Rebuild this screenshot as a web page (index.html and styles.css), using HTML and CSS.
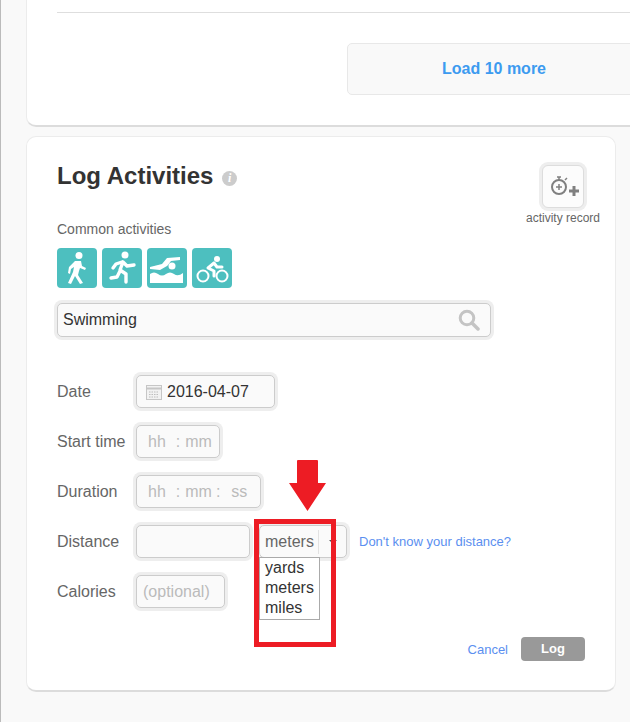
FILE: index.html
```html
<!DOCTYPE html>
<html lang="en">
<head>
    <meta charset="UTF-8">
    <title>Log Activities</title>
    <link rel="stylesheet" href="styles.css">
</head>
<body>
    <div class="page">
        <div class="card card-top">
            <div class="divider"></div>
            <div class="load-row">
                <a class="load-more" href="#">Load 10 more</a>
            </div>
        </div>

        <div class="card card-log">
            <div class="log-head">
                <div>
                    <h2 class="log-title">Log Activities <span class="info-dot">i</span></h2>
                    <div class="common-label">Common activities</div>
                </div>
                <div class="record">
                    <div class="record-btn">
                        <svg width="34" height="30" viewBox="0 0 34 30">
                            <circle cx="11" cy="16" r="7" fill="none" stroke="#808080" stroke-width="2"/>
                            <path d="M9 6h4M11 6v3M17 9l2-2M11 13v6M8 16h6" fill="none" stroke="#808080" stroke-width="1.5"/>
                            <path d="M26 15v10M21 20h10" fill="none" stroke="#808080" stroke-width="3"/>
                        </svg>
                    </div>
                    <div class="record-label">activity record</div>
                </div>
            </div>

            <div class="activity-icons">
                <a class="activity-icon" href="#">
                    <svg width="40" height="40" viewBox="0 0 40 40">
                        <circle cx="22" cy="7.500" r="3.500" fill="#fff"/>
                        <path d="M18 13h6l1 5 4 2-1 2-5-2-1 3-1 4 5 8-3 1-5-8-4 8-3-1 5-11 1-5-3 2-1 5-2-1 1-6z" fill="#fff"/>
                    </svg>
                </a>
                <a class="activity-icon" href="#">
                    <svg width="40" height="40" viewBox="0 0 40 40">
                        <circle cx="23" cy="7" r="3.500" fill="#fff"/>
                        <path d="M21 14l-3 8 6 4 0 8M18 23l-3 6-6 1M20 14l-6 2-3 4M21 14l4 4 7-1" fill="none" stroke="#fff" stroke-width="3.400" stroke-linecap="round" stroke-linejoin="round"/>
                    </svg>
                </a>
                <a class="activity-icon" href="#">
                    <svg width="40" height="40" viewBox="0 0 40 40">
                        <circle cx="25" cy="18" r="3.500" fill="#fff"/>
                        <path d="M3 19l12-3 5-6 13-1v3l-9 1-3 4-1 1-7 4-10-1z" fill="#fff"/>
                        <path d="M3 26q4-3 8 0t8 0 8 0 9-1v10H3z" fill="#fff"/>
                    </svg>
                </a>
                <a class="activity-icon" href="#">
                    <svg width="40" height="40" viewBox="0 0 40 40">
                        <circle cx="25" cy="11" r="3" fill="#fff"/>
                        <circle cx="11" cy="28" r="5.500" fill="none" stroke="#fff" stroke-width="2"/>
                        <circle cx="30" cy="28" r="5.500" fill="none" stroke="#fff" stroke-width="2"/>
                        <path d="M22 15l-6 5 6 3v5M22 15l3 4h5" fill="none" stroke="#fff" stroke-width="3" stroke-linecap="round" stroke-linejoin="round"/>
                    </svg>
                </a>
            </div>

            <div class="field search-field">
                <span class="search-text">Swimming</span>
                <svg width="22" height="22" viewBox="0 0 22 22">
                    <circle cx="9" cy="9" r="6.800" fill="none" stroke="#c4c4c4" stroke-width="3"/>
                    <path d="M14 14l6 6" stroke="#c4c4c4" stroke-width="3.500" stroke-linecap="round"/>
                </svg>
            </div>

            <div class="form-rows">
                <div class="form-row">
                    <label class="form-label">Date</label>
                    <div class="field date-field">
                        <svg width="18" height="18" viewBox="0 0 18 18">
                            <rect x="1.500" y="2.500" width="15" height="14" fill="#f2f2f2" stroke="#c6c6c6"/>
                            <path d="M2 5.500h14" stroke="#c6c6c6" stroke-width="2"/>
                            <path d="M4 9h10M4 11.500h10M4 14h10" stroke="#bdbdbd" stroke-dasharray="1.500 1"/>
                        </svg>
                        <span class="date-text">2016-04-07</span>
                    </div>
                </div>
                <div class="form-row">
                    <label class="form-label">Start time</label>
                    <div class="field time-field time-short"><span>hh</span><span class="colon">:</span><span>mm</span></div>
                </div>
                <div class="form-row">
                    <label class="form-label">Duration</label>
                    <div class="field time-field time-long"><span>hh</span><span class="colon">:</span><span>mm</span><span class="colon2">:</span><span>ss</span></div>
                </div>
                <div class="form-row">
                    <label class="form-label">Distance</label>
                    <div class="field distance-field"></div>
                    <div class="unit-wrap">
                        <div class="field unit-select">
                            <span class="unit-value">meters</span>
                            <span class="unit-arrow"></span>
                        </div>
                        <ul class="unit-menu">
                            <li>yards</li>
                            <li>meters</li>
                            <li>miles</li>
                        </ul>
                    </div>
                    <a class="distance-link" href="#">Don't know your distance?</a>
                </div>
                <div class="form-row">
                    <label class="form-label">Calories</label>
                    <div class="field calories-field">(optional)</div>
                </div>
            </div>

            <div class="log-actions">
                <a class="cancel-link" href="#">Cancel</a>
                <a class="log-btn" href="#">Log</a>
            </div>
        </div>

        <!-- red annotation drawn on top of the screenshot -->
        <div class="mark-box"></div>
        <svg class="mark-arrow" width="37" height="51" viewBox="0 0 37 51">
            <path d="M8 1q0-1 1-1h19q1 0 1 1v22h8L18.500 51 0 23h8z" fill="#ed1c24"/>
        </svg>
    </div>
</body>
</html>
```

FILE: styles.css
```css
html, body {
    margin: 0;
    padding: 0;
    height: 100%;
}

body {
    font-family: "Liberation Sans", Arial, sans-serif;
    background: #f9f9f9;
    color: #333;
    overflow: hidden;
}

a {
    text-decoration: none;
}

.page {
    position: relative;
    height: 722px;
    box-sizing: border-box;
    border-left: 1px solid #bbb;
    padding-left: 25px;
    overflow: hidden;
}

.card {
    background: white;
    border: 1px solid #ececec;
    border-bottom: 2px solid #dcdcdc;
    box-sizing: border-box;
}

.card-top {
    width: 640px;
    height: 127px;
    border-top: none;
    border-radius: 0 0 10px 10px;
    padding: 12px 0 0 30px;
}

.divider {
    height: 1px;
    background: #dedede;
}

.load-row {
    margin: 30px 0 0 290px;
}

.load-more {
    display: block;
    width: 294px;
    height: 52px;
    line-height: 50px;
    box-sizing: border-box;
    text-align: center;
    font-size: 16px;
    font-weight: bold;
    color: #3d9bf0;
    background: #f9f9f9;
    border: 1px solid #e8e8e8;
    border-radius: 5px;
}

.card-log {
    width: 590px;
    height: 556px;
    margin-top: 9px;
    border-radius: 10px;
    padding: 25px 30px 0 30px;
}

.log-head {
    display: flex;
    justify-content: space-between;
}

.log-title {
    margin: 0;
    font-size: 24px;
    line-height: 28px;
    font-weight: bold;
    color: #333;
}

.info-dot {
    display: inline-block;
    width: 15px;
    height: 15px;
    line-height: 15px;
    margin-left: 2px;
    border-radius: 50%;
    background: #ccc;
    color: white;
    font-family: "Liberation Serif", serif;
    font-style: italic;
    font-size: 12px;
    text-align: center;
    vertical-align: 2px;
}

.common-label {
    margin-top: 30px;
    font-size: 14px;
    line-height: 18px;
    color: #666;
}

.record {
    width: 80px;
    margin-right: -18px;
    text-align: center;
    padding-top: 3px;
}

.record-btn {
    width: 42px;
    height: 43px;
    margin: 0 auto;
    box-sizing: border-box;
    background: #fcfcfc;
    border: 1px solid #ddd;
    border-radius: 6px;
    box-shadow: 0 0 0 3px #eee;
    padding: 5px 0 0 3px;
}

.record-label {
    margin-top: 2px;
    font-size: 12px;
    line-height: 16px;
    color: #666;
    white-space: nowrap;
}

.activity-icons {
    display: flex;
    gap: 5px;
    margin-top: 10px;
}

.activity-icon {
    display: block;
    width: 40px;
    height: 40px;
    background: #4dbfbf;
    border-radius: 4px;
}

.activity-icon svg {
    display: block;
}

.field {
    box-sizing: border-box;
    height: 33px;
    background: #fafafa;
    border: 1px solid #ccc;
    border-radius: 5px;
    box-shadow: 0 0 0 3px #eee;
    font-size: 16px;
    display: flex;
    align-items: center;
}

.search-field {
    width: 434px;
    height: 34px;
    margin-top: 15px;
    padding: 0 10px 0 5px;
    justify-content: space-between;
}

.search-text {
    color: #333;
}

.form-rows {
    display: flex;
    flex-direction: column;
    gap: 17px;
    margin-top: 38px;
}

.form-row {
    display: flex;
    align-items: center;
    height: 33px;
}

.form-label {
    width: 79px;
    flex: none;
    font-size: 16px;
    color: #666;
}

.date-field {
    width: 139px;
    padding-left: 8px;
}

.date-text {
    margin-left: 4px;
    color: #333;
}

.time-field {
    padding-left: 11px;
    color: #bbb;
}

.time-short {
    width: 84px;
}

.time-long {
    width: 125px;
}

.colon {
    margin: 0 5px 0 10px;
}

.colon2 {
    margin: 0 11px 0 4px;
}

.distance-field {
    width: 114px;
}

.unit-wrap {
    position: relative;
    margin-left: 9px;
}

.unit-select {
    width: 88px;
    padding-left: 5px;
}

.unit-value {
    width: 53px;
    color: #666;
    border-right: 1px solid #e2e2e2;
    line-height: 24px;
}

.unit-arrow {
    width: 0;
    height: 0;
    margin-left: 10px;
    border-left: 4px solid transparent;
    border-right: 4px solid transparent;
    border-top: 4px solid #555;
}

.unit-menu {
    position: absolute;
    top: 32px;
    left: 0;
    width: 61px;
    box-sizing: border-box;
    margin: 0;
    padding: 0 0 1px 5px;
    list-style: none;
    background: white;
    border: 1px solid #aaa;
    font-size: 16px;
    line-height: 20px;
    color: #333;
}

.distance-link {
    margin-left: 12px;
    font-size: 13px;
    color: #5b8ff0;
}

.calories-field {
    width: 89px;
    padding-left: 6px;
    color: #bbb;
}

.log-actions {
    display: flex;
    justify-content: flex-end;
    align-items: center;
    gap: 13px;
    margin-top: 29px;
}

.cancel-link {
    font-size: 13px;
    color: #5b8ff0;
}

.log-btn {
    width: 64px;
    height: 24px;
    line-height: 24px;
    text-align: center;
    font-size: 13px;
    font-weight: bold;
    color: white;
    background: #999;
    border-radius: 4px;
}

.mark-box {
    position: absolute;
    left: 253px;
    top: 519px;
    width: 82px;
    height: 128px;
    box-sizing: border-box;
    border: 5px solid #ed1c24;
}

.mark-arrow {
    position: absolute;
    left: 288px;
    top: 460px;
}
```
